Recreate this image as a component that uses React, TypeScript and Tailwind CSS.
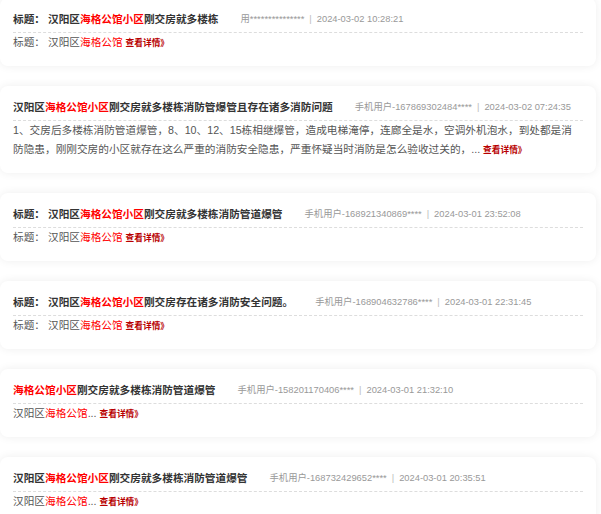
const RED = "text-[#f00]";

type Item = {
  prefix?: boolean;
  lead?: string;
  tail: string;
  meta: string;
  time: string;
  body: React.ReactNode;
};

function More() {
  return <span className="ml-[3px] text-[8.7px] font-bold text-[#b80000]">查看详情》</span>;
}

function SubTitle() {
  return (
    <>
      标题：<span className="ml-[3px]">汉阳区</span>
      <span className={RED}>海格公馆</span>
      <More />
    </>
  );
}

function ShortSub() {
  return (
    <>
      汉阳区<span className={RED}>海格公馆</span>...
      <More />
    </>
  );
}

const items: Item[] = [
  {
    prefix: true,
    lead: "汉阳区",
    tail: "刚交房就多楼栋",
    meta: "用***************",
    time: "2024-03-02 10:28:21",
    body: <SubTitle />,
  },
  {
    lead: "汉阳区",
    tail: "刚交房就多楼栋消防管爆管且存在诸多消防问题",
    meta: "手机用户-167869302484****",
    time: "2024-03-02 07:24:35",
    body: (
      <>
        1、交房后多楼栋消防管道爆管，8、10、12、15栋相继爆管，造成电梯淹停，连廊全是水，空调外机泡水，到处都是消
        <br />
        防隐患，刚刚交房的小区就存在这么严重的消防安全隐患，严重怀疑当时消防是怎么验收过关的，...
        <More />
      </>
    ),
  },
  {
    prefix: true,
    lead: "汉阳区",
    tail: "刚交房就多楼栋消防管道爆管",
    meta: "手机用户-168921340869****",
    time: "2024-03-01 23:52:08",
    body: <SubTitle />,
  },
  {
    prefix: true,
    lead: "汉阳区",
    tail: "刚交房存在诸多消防安全问题。",
    meta: "手机用户-168904632786****",
    time: "2024-03-01 22:31:45",
    body: <SubTitle />,
  },
  {
    tail: "刚交房就多楼栋消防管道爆管",
    meta: "手机用户-158201170406****",
    time: "2024-03-01 21:32:10",
    body: <ShortSub />,
  },
  {
    lead: "汉阳区",
    tail: "刚交房就多楼栋消防管道爆管",
    meta: "手机用户-168732429652****",
    time: "2024-03-01 20:35:51",
    body: <ShortSub />,
  },
];

function Card({ item }: { item: Item }) {
  return (
    <div className="w-[596px] rounded-[8px] bg-white px-[13px] pt-[11px] pb-[13px] shadow-[0_0_10px_rgba(0,0,0,0.07)]">
      <div className="flex items-center border-b border-dashed border-[#ddd] pb-[3px] leading-[20px]">
        <div className="text-[10.67px] font-bold text-[#333]">
          {item.prefix && <>标题：<span className="ml-[3px]" /></>}
          {item.lead}
          <span className={RED}>海格公馆小区</span>
          {item.tail}
        </div>
        <div className="ml-[22px] text-[9.33px] text-[#999]">
          {item.meta}
          <span className="mx-[5px] text-[#bbb]">|</span>
          {item.time}
        </div>
      </div>
      <div className="text-[10.67px] leading-[19px] text-[#555]">{item.body}</div>
    </div>
  );
}

export default function App() {
  return (
    <div
      className="-mt-[2px] flex min-h-screen flex-col gap-[20px] bg-white pb-10"
      style={{ fontFamily: '"Liberation Sans", "Noto Sans CJK SC", sans-serif' }}
    >
      {items.map((item, i) => (
        <Card key={i} item={item} />
      ))}
    </div>
  );
}
